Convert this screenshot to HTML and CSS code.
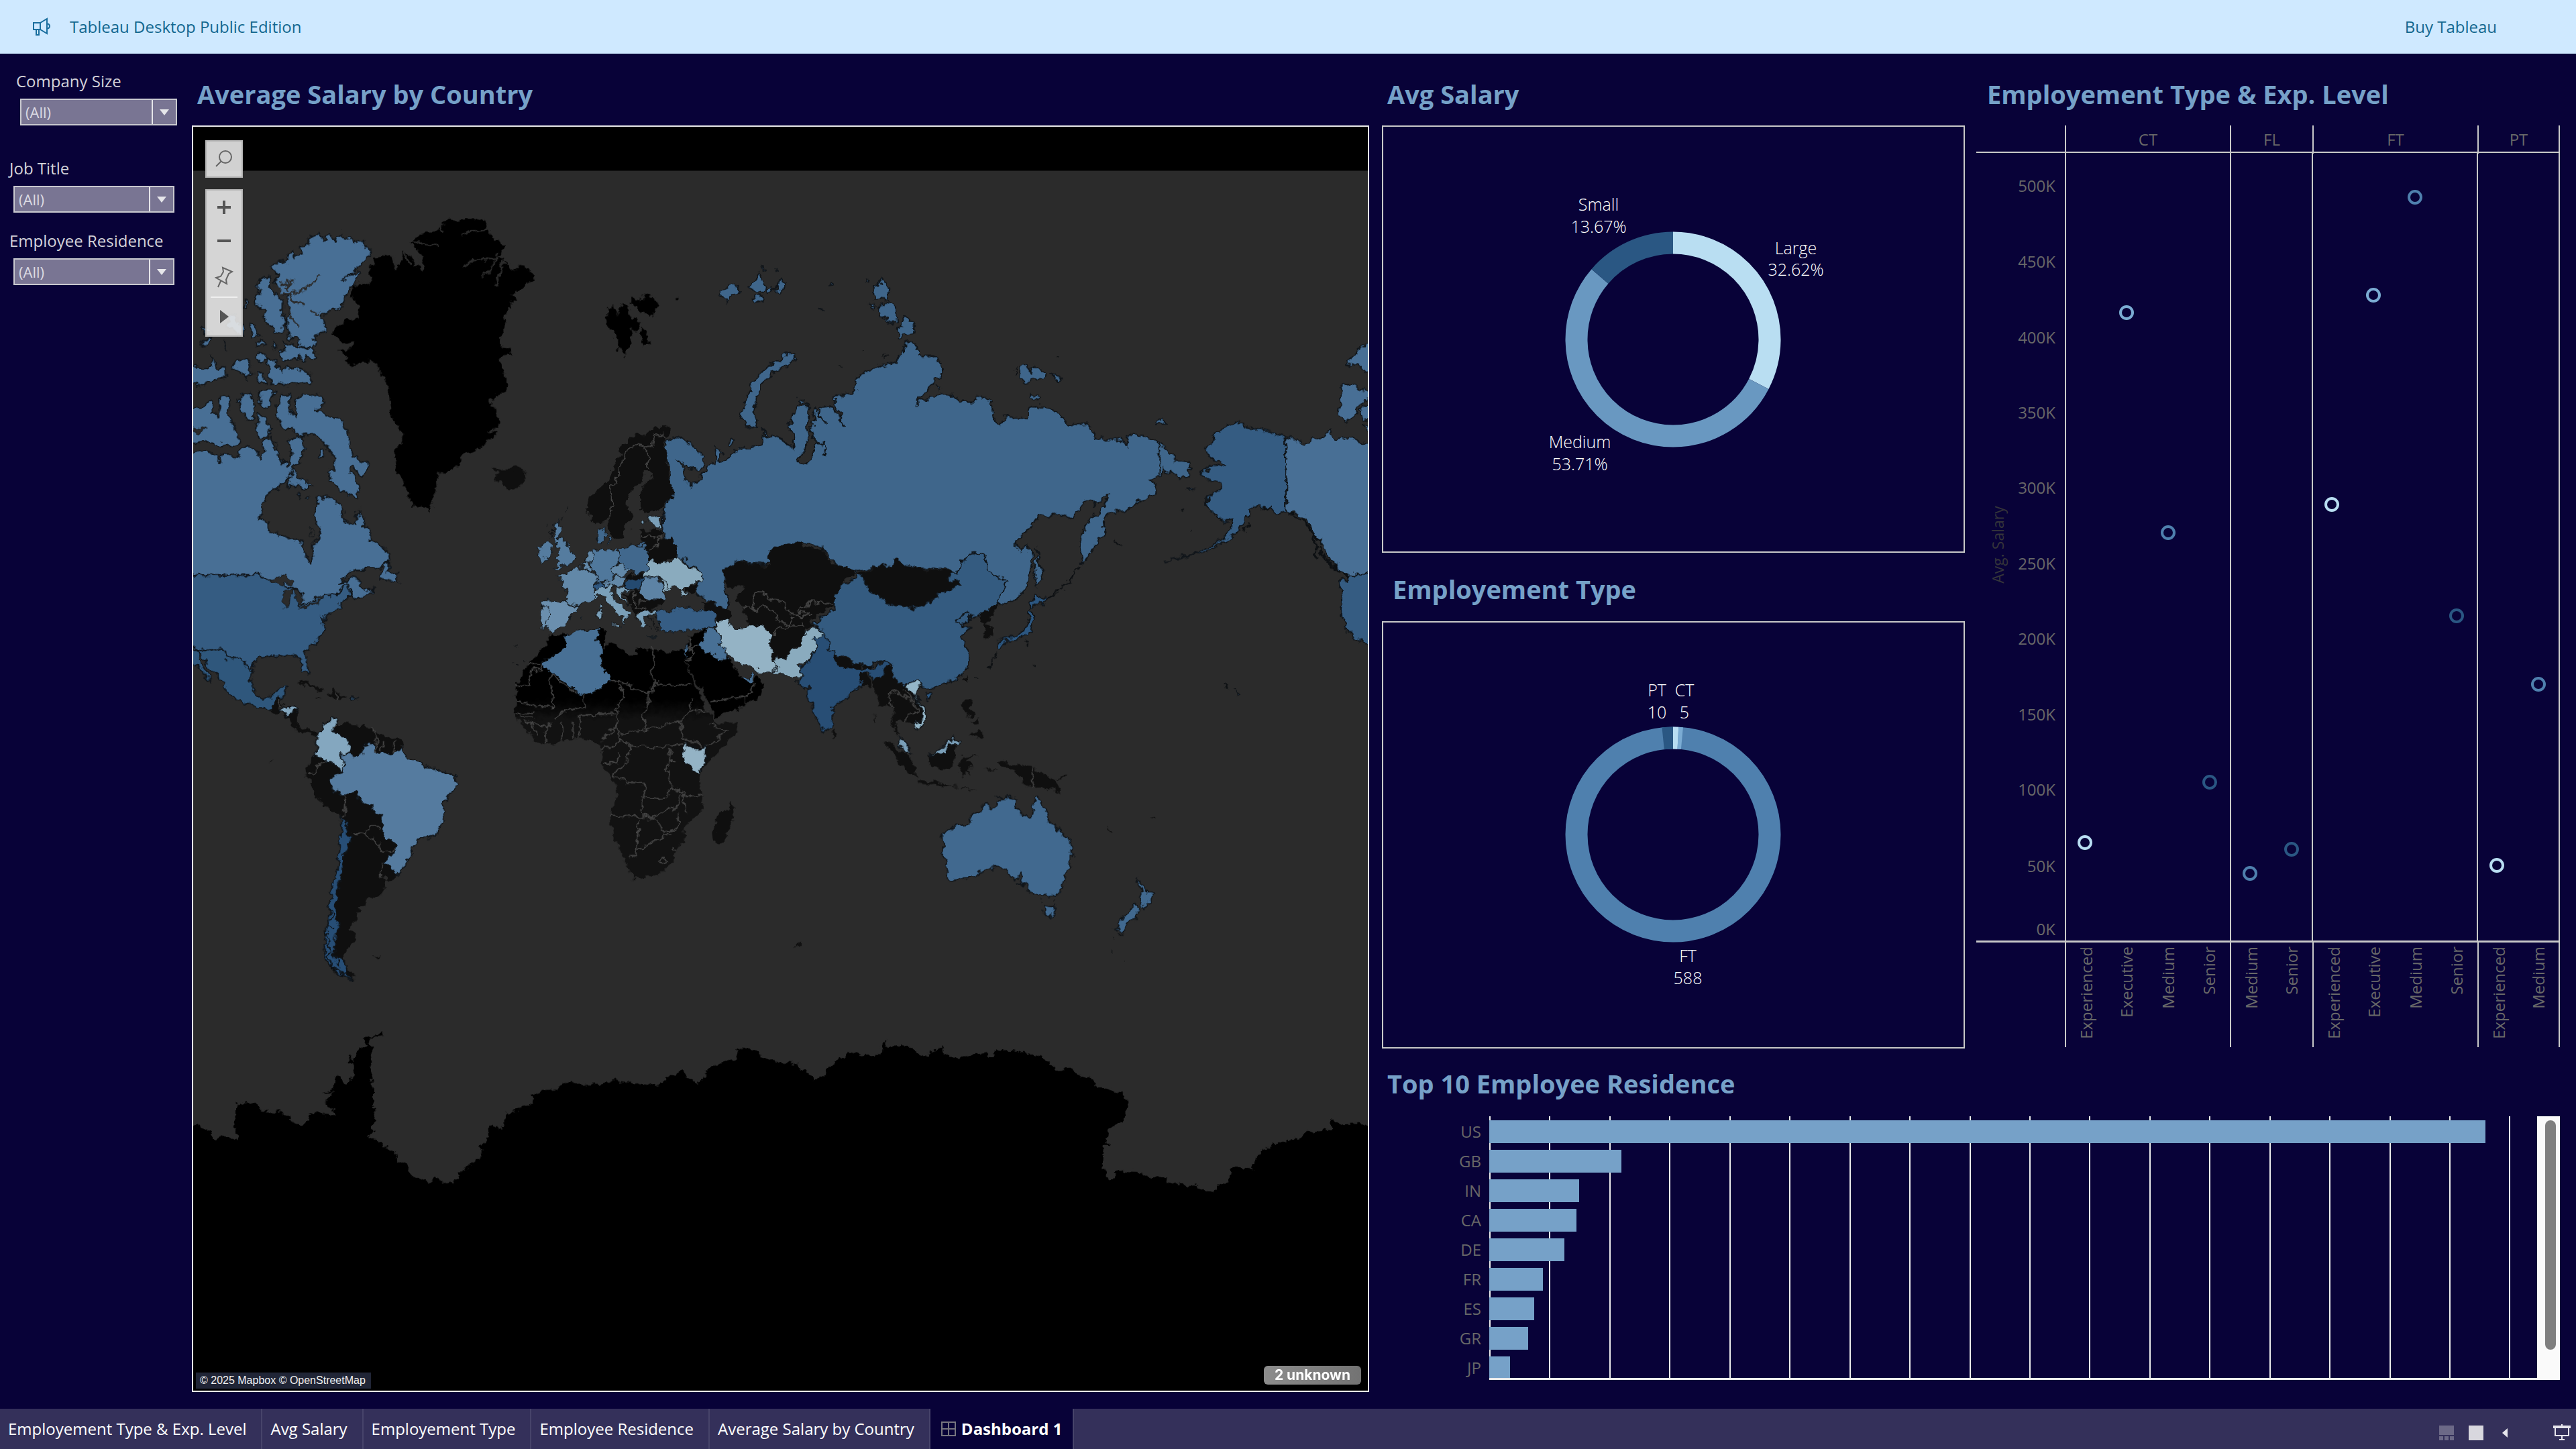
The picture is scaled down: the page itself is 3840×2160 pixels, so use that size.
FILE: index.html
```html
<!DOCTYPE html>
<html lang="en">
<head>
<meta charset="utf-8">
<title>Dashboard 1</title>
<link rel="stylesheet" href="styles.css">
</head>
<body>
<header class="banner">
  <svg class="banner-icon" width="28" height="28" viewBox="0 0 28 28" aria-hidden="true"><path d="M2 8H12L22 2V24L12 18H2ZM12 8V18M6 18V26H10V18M22 9Q26 10 26 13T22 17"/></svg>
  <a class="banner-link" href="#edition">Tableau Desktop Public Edition</a>
  <a class="banner-link banner-buy" href="#buy">Buy Tableau</a>
</header>

<main class="dashboard">
  <form class="filters">
    <div class="filter filter-size">
      <label for="size">Company Size</label>
      <div class="picker"><select id="size"><option>(All)</option></select></div>
    </div>
    <div class="filter filter-job">
      <label for="job">Job Title</label>
      <div class="picker"><select id="job"><option>(All)</option></select></div>
    </div>
    <div class="filter">
      <label for="residence">Employee Residence</label>
      <div class="picker"><select id="residence"><option>(All)</option></select></div>
    </div>
  </form>

  <section class="map-section">
    <h2 class="title title-top">Average Salary by Country</h2>
    <div class="map">
      <svg class="map-art" viewBox="288 188 1751 1885" preserveAspectRatio="xMidYMid slice" role="img" aria-label="World map of average salary">
        <defs>
          <linearGradient id="sahara" x1="0" y1="0" x2="0" y2="1"><stop offset=".28" stop-color="#000"/><stop offset=".36" stop-color="#121212"/></linearGradient>
          <filter id="coastline" filterUnits="userSpaceOnUse" x="270" y="170" width="1790" height="1920" color-interpolation-filters="sRGB">
            <feTurbulence type="fractalNoise" baseFrequency=".09" numOctaves="3" seed="4"/>
            <feDisplacementMap in="SourceGraphic" scale="14" xChannelSelector="R" yChannelSelector="G"/>
          </filter>
        </defs>
        <rect x="280" y="180" width="1770" height="1900" fill="#2b2b2b"/>
        <rect x="280" y="180" width="1770" height="74" fill="#000"/>

        <g filter="url(#coastline)">
        <!-- Antarctica -->
        <g transform="translate(280 900) scale(.5741 .6122)">
          <path d="M-30 1272L30 1270 60 1285 70 1308 90 1295 130 1305 122 1265 120 1235 125 1218 155 1213 183 1218 188 1232 235 1235 265 1245 272 1258 295 1268 312 1262 316 1248 328 1232 340 1243 385 1248 378 1228 355 1213 372 1200 378 1185 348 1194 375 1180 382 1165 388 1145 400 1150 402 1165 412 1170 428 1150 428 1115 412 1112 420 1102 430 1108 440 1088 462 1070 452 1058 480 1056 505 1038 508 1050 490 1052 468 1068 483 1095 472 1115 480 1160 481 1200 487 1230 485 1250 478 1270 480 1290 470 1300 485 1303 520 1325 540 1340 580 1390 620 1410 640 1400 690 1412 705 1385 725 1375 765 1338 762 1320 782 1300 778 1272 795 1268 810 1278 820 1262 830 1238 890 1218 895 1198 930 1182 970 1178 990 1160 1005 1170 1070 1168 1110 1160 1155 1165 1205 1175 1245 1160 1250 1148 1285 1138 1308 1158 1330 1165 1335 1150 1365 1125 1405 1112 1425 1108 1425 1090 1440 1082 1462 1082 1478 1096 1500 1110 1530 1115 1568 1118V1960H-30Z"/>
        </g>
        <g transform="translate(1100 880) scale(.6122)">
          <path d="M0 1118L30 1115 45 1125 55 1140 90 1148 147 1155 152 1168 172 1168 185 1195 212 1180 215 1165 245 1145 270 1125 300 1132 345 1128 355 1098 365 1110 385 1106 410 1108 425 1120 460 1132 478 1115 495 1113 505 1128 530 1137 605 1125 615 1137 630 1120 670 1118 740 1138 775 1165 815 1163 830 1177 860 1187 875 1208 925 1220 950 1243 945 1275 935 1290 912 1300 900 1325 895 1345 907 1350 890 1352 887 1395 895 1425 905 1434 918 1432 920 1412 970 1415 1000 1426 1035 1428 1055 1443 1130 1453 1157 1465 1170 1450 1197 1430 1200 1408 1215 1403 1252 1410 1262 1383 1280 1360 1305 1348 1335 1348 1345 1337 1370 1332 1380 1322 1405 1315 1440 1313 1446 1287 1470 1300 1510 1298 1534 1303 1570 1303V1980H0Z"/>
          <path d="M140 857h12v8h-12zM1003 553l10-4 1 6zM900 575l16 13-6 1zM827 457l8 6zM480 275h8zM1020 543h4z" fill="#111"/>
        </g>

        <!-- Americas, north -->
        <g class="land" transform="translate(280 180) scale(.5741)">
          <path class="ice" d="M680 256L735 251 775 262 778 275 765 283 785 284 790 300 825 322 808 345 797 352 820 355 826 375 835 372 840 392 858 375 880 378 896 398 885 420 870 428 862 436 845 450 855 462 830 485 825 515 818 540 812 580 830 590 838 605 812 612 815 640 826 660 830 690 820 710 798 712 788 722 788 740 802 750 808 798 775 805 802 812 770 842 735 857 720 858 712 870 705 893 690 898 682 911 655 912 648 930 650 955 636 975 628 1018 608 1000 585 1002 570 965 555 930 542 910 538 860 550 838 560 820 548 795 530 772 525 735 522 690 515 675 500 658 498 640 480 625 455 625 440 632 420 635 405 625 412 610 390 595 430 588 432 575 400 577 378 555 380 540 410 518 437 512 450 485 440 468 423 462 428 430 445 420 470 425 475 400 470 380 490 355 525 348 535 372 555 375 558 335 575 350 590 370 608 388 605 350 590 330 578 315 600 295 620 288 640 290 655 270Z"/>
          <path class="fjord" d="M708 299L735 286 770 285M585 315L630 317 650 328M718 380L738 360 800 357 785 395 762 397M820 362L800 428M600 350L610 385M450 412L470 428M530 350L540 385M562 340L575 372M650 272L668 288"/>
          <path class="dark" d="M790 900L812 905 830 905 858 897 872 905 878 920 865 945 835 955 815 945 808 935 795 925 810 918ZM280 1458L305 1455 340 1472 360 1480 340 1483 310 1466ZM360 1490L375 1475 400 1490 412 1497 385 1500ZM333 1498h12v3h-12zM728 1290h4zM750 1298h14zM775 1310h5zM840 1405h18zM868 1402h14z"/>
          <path class="ice" d="M1087 485L1112 480 1115 510 1125 475 1145 478 1152 510 1175 522 1170 535 1155 540 1150 575 1140 590 1134 614 1115 590 1118 570 1105 550 1090 530ZM1150 455L1170 465 1190 450 1222 465 1224 480 1202 508 1170 495 1155 475ZM1178 535L1195 560 1197 580 1180 583 1175 560ZM1265 460l10-1-2 8-8-1z"/>
          <path class="ca" d="M216 380L235 365 255 362 272 335 278 352 292 345 296 325 310 322 320 302 345 292 350 308 370 293 378 310 400 290 405 308 425 300 430 315 455 308 460 325 475 335 474 352 440 380 402 412 420 400 445 392 435 420 415 440 405 470 385 492 350 500 345 505 357 520 358 550 330 555 332 575 315 590 290 585 280 565 268 570 262 545 255 530 262 490 258 455 235 440 225 415 235 400ZM200 402L212 405 215 430 230 450 245 470 245 500 255 520 245 548 232 552 210 530 195 510 200 490 178 475 176 455 190 440 180 425ZM250 570L265 580 300 590 330 592 334 615 322 622 310 610 300 622 285 612 270 622 250 622 235 612 238 598 250 595ZM205 615L225 625 240 650 260 640 300 650 320 655 318 680 285 685 260 685 235 680 215 682 213 655ZM178 602L195 600 204 622 190 628 175 615ZM180 655L196 652 200 680 182 678ZM120 625L145 618 165 630 165 660 150 670 140 650 118 645ZM-20 622L38 645 60 640 62 610 75 640 95 640 98 665 60 675 35 688 -20 675ZM160 528L175 530 188 558 168 562ZM35 572L62 560 55 580 40 585ZM178 572h22l4 8-22 4zM96 570l8 24-6-4zM220 576l12 4-4 12-8-6zM150 465l6 10-2 10-6-6zM108 502L122 505 130 520 145 540 142 560 120 552 104 530ZM35 535l15 5 12 10-15 2zM-20 735L25 748 40 738 60 725 65 755 80 765 85 715 105 712 108 770 135 830 115 845 80 840 40 835 -20 845ZM185 702L230 702 215 735 195 745 187 730ZM130 730L145 705 165 705 175 740 168 775 155 775 140 750ZM182 760L200 770 212 800 205 820 185 822 178 800ZM232 740L245 712 270 708 262 735 266 760 278 765 280 725 300 708 345 715 355 740 330 748 355 760 375 770 400 780 415 800 420 825 418 850 440 875 472 888 465 915 445 920 430 900 420 905 440 940 442 980 420 968 400 960 370 935 365 910 382 905 378 870 355 835 335 815 305 810 290 820 270 800 240 795 232 770ZM342 855L355 852 357 872 345 875ZM262 925L270 905 280 912 282 925 300 935 325 950 300 955 285 945 265 950ZM285 965l10 2-4 10zM305 980l12-4-2 12zM500 1190L510 1155 520 1145 520 1170 540 1175 545 1200 520 1192Z"/>
          <path class="fjord" d="M225 425L240 445 258 450 300 440 320 425 342 398M240 425L280 418M262 415L255 440M258 450L300 480M262 490L275 525 290 535M318 492L340 500"/>
          <path class="ca" d="M-20 862L50 855 75 870 85 890 90 865 130 870 150 845 165 855 180 862 190 878 198 860 195 835 215 820 235 870 245 890 252 880 262 895 270 860 262 835 275 815 300 830 302 860 290 885 275 895 262 925 240 945 212 965 195 990 190 1030 205 1040 210 1062 240 1072 270 1090 295 1092 300 1120 318 1148 326 1125 325 1100 340 1085 345 1060 335 1040 330 1025 335 1000 335 975 360 975 380 985 400 1005 402 1035 420 1045 435 1042 445 1010 460 1045 475 1085 500 1105 520 1120 522 1140 500 1160 450 1162 430 1162 410 1180 395 1205 420 1188 445 1190 440 1205 465 1218 485 1215 465 1230 440 1244 430 1240 425 1225 415 1200 400 1215 395 1228 360 1230 325 1245 290 1262 295 1225 285 1215 250 1210 240 1195 190 1185 188 1178 -20 1178"/>
          <path class="us" d="M-20 1178L188 1178 190 1185 240 1195 250 1210 285 1215 295 1225 290 1262 325 1245 360 1230 395 1228 400 1215 415 1200 425 1225 418 1240 397 1248 395 1265 365 1278 355 1300 347 1290 354 1330 335 1350 310 1370 303 1385 313 1415 313 1435 300 1425 292 1395 282 1388 262 1385 240 1392 215 1388 180 1393 168 1408 168 1430 155 1418 140 1395 115 1400 100 1385 85 1372 60 1378 -20 1362"/>
          <path class="mx" d="M-20 1362L60 1378 85 1372 100 1385 115 1400 140 1395 155 1418 168 1430 165 1455 172 1485 195 1500 222 1492 228 1475 258 1470 250 1495 240 1500 228 1505 215 1530 205 1530 180 1520 150 1512 105 1490 100 1475 85 1450 60 1425 40 1395 22 1372 30 1400 55 1440 63 1455 45 1445 30 1420 -20 1392"/>
          <path class="us" d="M424 1497h14v5h-14z"/>
          <path class="lake" d="M215 1192L235 1182 255 1180 275 1195 272 1208 250 1200 235 1206ZM248 1235L255 1220 288 1215 268 1222 262 1262 252 1265 248 1250ZM272 1215L290 1220 303 1242 298 1256 285 1250ZM288 1268L345 1243 340 1250 295 1270ZM322 1243L352 1232 345 1240ZM318 1055L325 1055 328 1080 316 1078ZM12 795L45 798 40 808 12 806Z"/>
        </g>

        <!-- Americas, south -->
        <g class="land" transform="translate(280 900) scale(.5741 .6122)">
          <path class="dark" d="M212 262L225 240 240 225 245 240 240 255 285 255 285 290 295 300 315 308 340 318 330 320 310 316 290 314 270 290 245 266 225 266Z"/>
          <path class="dark" d="M335 315L350 310 355 292 385 280 390 290 430 292 475 298 490 315 545 332 560 345 565 375 600 385 615 400 660 402 695 420 698 440 665 480 660 525 645 560 600 575 582 595 580 610 543 660 535 670 505 668 512 690 500 708 465 712 460 735 442 738 450 752 440 755 435 775 420 792 435 810 430 825 415 840 405 862 415 890 437 902 420 912 385 900 360 870 355 830 370 760 372 700 388 640 395 580 400 520 375 505 350 492 330 455 305 415 308 395 320 370 328 365 335 340Z"/>
          <path class="co" d="M335 315L350 310 355 292 385 280 390 285 378 300 385 320 415 325 422 345 418 365 402 365 405 380 402 408 385 390 360 385 345 372 328 365 335 340ZM237 262L248 250 280 250 287 256 262 270 245 265Z"/>
          <path class="br" d="M402 365L425 362 440 370 455 362 455 345 485 338 490 362 515 365 550 355 560 345 568 375 600 385 615 400 660 402 695 420 698 440 690 455 665 480 663 525 645 560 600 575 582 595 580 615 560 640 543 660 525 640 508 628 535 605 540 590 525 572 510 570 505 555 505 520 485 508 480 488 460 485 440 470 438 455 410 465 380 458 370 435 378 415 402 408Z"/>
          <path class="cl" d="M400 520L408 525 412 560 425 568 412 605 402 615 400 660 388 700 385 740 388 780 385 815 378 850 385 862 412 868 412 900 425 912 395 905 375 885 358 862 354 830 364 780 368 735 372 700 388 650 395 580Z"/>
          <path class="rift" d="M355 795L370 815 360 830 372 845 362 860 380 872 372 885 392 890 400 905 412 900M366 745L376 760 366 775 374 790M385 865L395 885"/>
          <path class="line" d="M475 298L490 315 490 362M505 332L503 362M537 335L535 360M315 415L330 412 335 395 355 382M408 465L405 520M425 560L460 560 470 538 495 538 500 550M460 560L500 585 500 602 525 604 538 595M508 628L500 650 502 668M388 290L378 300M240 232L240 250M385 215V232"/>
          <path class="dark" d="M478 860l24-4-8 8zM676 892l12 6zM220 380h3v3h-3z"/>

          <!-- Africa -->
          <path fill="url(#sahara)" d="M912 122L930 95 945 72 980 75 1065 60 1085 65 1085 95 1120 105 1150 122 1162 125 1170 105 1200 112 1240 118 1280 112 1292 120 1290 140 1325 210 1350 260 1365 285 1375 292 1428 285 1425 305 1395 345 1345 395 1328 415 1330 450 1338 465 1338 500 1290 540 1293 578 1270 590 1265 620 1225 660 1155 670 1148 650 1120 600 1095 520 1115 465 1100 425 1080 400 1070 385 1078 360 1072 340 1040 330 1020 325 970 335 930 342 900 330 880 305 855 280 848 258 855 235 850 205 870 165 890 140Z"/>
          <path class="dark" d="M1412 478L1422 500 1412 530 1395 580 1378 587 1363 570 1370 515 1400 500Z"/>
          <path class="ice" d="M1288 132L1295 100 1300 80 1345 60 1380 70 1400 130 1420 150 1440 185 1465 190 1480 178 1502 195 1490 220 1440 250 1365 275 1350 235 1310 170Z"/>
          <path class="line" d="M885 148H920V160L890 162 885 200H850M940 170L948 250H893M940 170L1015 218M1030 222V250L975 262 950 285M893 250L880 240H852M850 265H895M862 275H895M945 290L930 300 930 340M970 290V333M1000 285V325M1018 270V325M1018 270L1110 268 1115 290 1075 330M1095 185L1120 188 1130 225 1112 265M1120 188L1197 216V240L1180 270 1195 305 1120 320M1207 105V215M1207 197H1305M1197 216H1207M1195 305L1240 295 1275 285 1305 260 1310 230M1305 260L1355 262M1275 285L1290 330 1345 347 1400 310 1355 290M1150 345L1240 350 1285 338M1150 345L1140 380 1105 420 1135 424 1140 435 1180 435 1185 470 1240 475 1255 445 1245 400 1255 355M1180 470V515L1210 518 1275 490 1280 455 1255 445M1093 516L1180 520 1210 522 1240 555 1270 550 1275 510M1170 525V560L1165 612 1145 615M1170 598L1235 562 1255 560M1228 615l10 4 4 8-10 4-6-8zM1285 468L1338 462M1285 455L1295 510M1260 590v10h8M1080 385L1115 385 1118 360M1357 238L1440 226 1465 215 1468 192M1440 226L1448 242M1085 95L1080 112M1325 100L1300 112M870 285L895 290 930 300M895 290L905 320M1115 290L1120 330 1150 345M1075 350H1100L1120 330M1250 380H1265"/>
          <path class="ke" d="M1285 335L1300 345 1320 352 1347 345 1343 365 1345 385 1328 413 1300 395 1283 380 1290 355Z"/>
        </g>

        <!-- Russia, western part -->
        <g class="land" transform="translate(280 180) scale(.5741)">
          <path class="ru" d="M1568 842L1540 825 1512 816 1508 842 1470 850 1445 850 1410 865 1400 885 1378 880 1390 860 1370 845 1372 895 1355 890 1345 905 1335 925 1318 935 1305 945 1290 930 1290 905 1270 880 1300 900 1330 908 1343 890 1340 870 1300 835 1270 820 1245 830 1240 850 1250 900 1250 940 1260 965 1240 1000 1235 1015 1232 1055 1240 1085 1258 1095 1268 1130 1268 1140 1285 1133 1300 1150 1333 1172 1330 1195 1315 1225 1340 1240 1370 1255 1395 1268 1405 1250 1400 1225 1395 1200 1392 1165 1430 1142 1450 1148 1480 1155 1510 1150 1515 1115 1568 1100"/>
          <path class="ru" d="M1405 832l10-6 4 10-10 8zM1378 440l20-5 10-8 22 0 0 15-22 10-8 18-10-14zM1458 432l25-40 8 20 8 28-20 8zM1470 458l20-4 4 12-18 4zM1500 438l15-8 6 14-18 8zM1522 438l18-25 10 8-8 20zM1488 375h10l-2 8zM1526 382l10 2-4 4z"/>
        </g>

        <!-- Asia and the Pacific, north -->
        <g class="land" transform="translate(1100 180) scale(.6122 .5741)">
          <path class="ru" d="M0 850L25 848 60 840 65 818 85 818 110 830 138 852 130 800 125 785 145 738 165 735 172 745 172 830 155 870 145 885 165 895 180 870 190 840 178 800 190 740 200 770 215 785 195 770 200 745 225 740 250 770 258 795 250 760 235 740 235 715 285 705 285 670 310 650 350 635 385 625 400 600 405 580 420 573 435 585 440 610 475 610 495 625 497 660 465 690 432 738 450 722 495 710 530 715 545 730 575 730 585 710 615 725 622 765 637 793 650 770 705 772 708 745 735 740 775 750 805 790 850 785 865 800 870 825 930 825 945 840 955 812 990 815 1025 835 1068 880 1095 885 1105 905 1080 935 1065 915 1035 905 1030 925 1000 930 1015 940 1020 970 980 985 950 1012 905 1015 890 1040 893 1075 865 1110 840 1150 832 1090 845 1050 880 1015 905 970 890 975 870 1000 860 985 845 990 825 1015 820 1033 790 1022 730 1027 700 1070 672 1098 690 1115 700 1100 715 1120 718 1150 705 1200 680 1240 655 1252 637 1250 640 1225 662 1190 635 1187 610 1165 600 1130 575 1118 550 1130 545 1155 530 1172 515 1162 460 1165 440 1160 410 1155 380 1138 375 1158 330 1158 285 1172 235 1150 205 1108 145 1092 80 1115 78 1150 40 1150 0 1142"/>
          <path class="ru" d="M728 1110L735 1150 742 1182 728 1210 722 1170ZM125 602L140 605 135 625 90 650 60 680 45 720 38 760 48 795 20 790 8 770 15 740 30 690 60 650 95 622ZM352 408L370 435 365 465 330 462 335 430ZM345 480L370 468 385 480 387 520 370 525 345 505ZM408 505L430 530 430 548 388 562 395 535ZM320 472L338 478 330 488ZM312 410h8v6h-8zM685 640L700 632 712 650 720 635 745 652 745 665 720 670 700 680 685 660ZM758 655L770 662 790 668 780 678ZM715 710L735 718 732 725 712 720ZM1018 780L1035 772 1045 785 1018 790ZM1090 950l22 4-4 5zM224 425h7v5h-7zM200 488l8 6zM480 688l14 2-4 8zM150 722h10v8h-10zM60 800l12 12-4 6z"/>
          <path class="rift" d="M1025 835V922M190 840L208 835 215 868M245 640h8M300 595h5M350 605l8-5M355 610l12-2M675 645v12M775 612h6M1080 1006l6 4M1102 1062h3M912 1090l18 12M832 1160L815 1185 790 1210 755 1240"/>
          <path class="us" d="M1335 822L1300 808 1250 798 1212 780 1190 795 1162 810 1158 835 1135 850 1150 870 1165 885 1182 893 1155 900 1125 910 1140 930 1175 935 1176 955 1145 970 1140 995 1150 1015 1170 1025 1175 1038 1208 1035 1200 1060 1180 1085 1150 1105 1110 1125 1075 1136 1035 1143 1075 1138 1110 1128 1150 1112 1190 1088 1215 1068 1235 1040 1245 1010 1268 992 1275 1008 1290 1005 1310 1018 1335 1012Z"/>
          <path class="ca" d="M1570 850L1534 838 1500 825 1470 820 1455 830 1440 800 1425 825 1400 822 1380 838 1360 828 1335 822V1012L1355 1018 1385 1030 1400 1065 1420 1095 1440 1140 1480 1178H1570"/>
          <path class="us" d="M1570 1178H1484L1482 1198 1466 1188 1472 1240 1470 1280 1480 1310 1500 1345 1525 1352 1570 1390"/>
          <path class="ca" d="M1570 700L1534 700 1510 690 1490 686 1466 692 1470 715 1460 765 1472 770 1480 783 1500 770 1505 745 1534 725 1570 720M1570 575L1530 580 1515 590 1495 612 1480 635 1510 630 1525 650 1570 650M1570 735L1525 740 1512 755 1520 775 1570 770M1570 790l-50 0 15 10h30"/>
          <path class="rift thick" d="M1340 1018L1375 1035M1378 1030L1395 1065 1420 1090M1385 1050L1410 1085M1400 1080L1410 1110M1415 1110L1440 1150 1480 1175 1484 1195M1405 1105L1412 1135M1230 1060l15-15M1285 1010l12-8"/>
          <path class="dark" d="M292 1175L345 1155 372 1160 382 1138 410 1155 440 1160 460 1168 520 1165 515 1190 545 1203 510 1218 480 1235 470 1252 430 1266 360 1253 345 1232 318 1222 315 1200Z"/>
          <path class="cn" d="M290 1175L315 1200 318 1222 345 1232 360 1253 430 1266 470 1252 480 1235 510 1218 545 1203 515 1190 520 1168 530 1172 545 1155 550 1130 575 1118 600 1130 610 1165 635 1187 662 1190 640 1225 637 1250 620 1265 585 1288 570 1285 548 1310 530 1298 560 1275 562 1290 545 1312 568 1315 545 1335 555 1360 565 1388 555 1430 520 1455 480 1470 440 1470 410 1462 390 1468 375 1445 378 1410 355 1398 325 1412 290 1412 255 1390 220 1380 222 1350 205 1330 185 1300 235 1270 232 1225 250 1205 275 1198Z"/>
          <path class="dark" d="M585 1280L628 1258 620 1285 602 1305 620 1315 620 1340 598 1342 600 1305 588 1298ZM550 1445L562 1436 556 1460Z"/>
          <path class="jp" d="M630 1355L650 1345 680 1335 700 1322 710 1295 706 1272 718 1272 722 1300 712 1330 690 1340 672 1350 655 1348 645 1358 640 1375 630 1370ZM722 1225L740 1240 752 1245 740 1255 722 1255 708 1262ZM458 1488L475 1484 470 1498 460 1498Z"/>
          <path class="rift" d="M752 1245L780 1225M630 1385L610 1425M575 1445h12M1185 1465l10 3M1208 1474l8 4M725 1412v5M705 1350v15"/>
          <path class="us" d="M1216 1482l8 6-6 4z"/>
        </g>

        <!-- South Asia, Oceania -->
        <g class="land" transform="translate(1100 880) scale(.6122)">
          <path class="in" d="M185 90L205 100 220 118 222 145 232 150 232 165 260 180 300 190 330 188 360 168 375 175 350 200 330 225 325 205 300 200 300 235 285 240 260 265 232 285 230 325 210 345 195 320 175 265 172 232 160 240 145 225 158 212 150 190 175 170 188 140 180 110Z"/>
          <path class="dark" d="M232 158L240 155 270 172 295 180 292 192 260 185 235 170ZM302 178L325 180 322 188 302 188ZM298 198L320 205 325 232 300 232ZM328 225L352 200 372 174 380 212 405 232 430 255 450 290 448 312 428 328 412 318 390 310 382 325 392 355 385 350 375 320 380 285 365 275 345 280ZM230 335L243 348 235 360 228 350ZM353 368L375 372 410 400 435 430 435 455 415 442 385 405ZM435 460L495 468 540 478 500 475 445 468ZM545 480l40 6-40-2zM545 405L585 402 555 412 572 430 560 430 570 452 555 435 552 452 540 440ZM462 400L480 400 510 378 530 375 528 405 515 438 475 430 462 415ZM632 418L655 415 690 425 720 430 760 455 790 492 760 480 715 482 695 475 690 455 665 438ZM765 458L790 455 800 445 802 450 790 460ZM555 262L567 262 562 290 578 300 570 306 552 300 548 280ZM565 350L595 338 598 360 580 355ZM568 318L590 310 588 330 578 325ZM330 300l4 20-3 2zM336 345l4 8zM600 435h28v3h-28zM610 402l4 5z"/>
          <path class="line" d="M370 250L385 245 410 262 430 268 435 295 412 298 410 318M370 250L372 270 382 285M715 430V482M405 240L415 250 430 265"/>
          <path class="vn" d="M403 230L415 225 432 220 447 235 432 252 440 270 458 285 462 312 432 340 428 325 448 312 450 290 430 260 425 245Z"/>
          <path class="my" d="M390 358L408 362 415 380 420 398 405 390 395 375ZM468 400L495 382 512 368 525 355 540 368 512 378 505 398Z"/>
          <path class="au" d="M500 590L520 578 560 565 570 545 585 540 600 522 615 528 625 530 635 512 650 503 680 508 675 530 690 540 710 552 718 545 720 505 727 497 735 520 748 532 757 562 780 580 790 595 812 615 814 650 800 690 790 720 785 735 755 745 735 742 710 735 705 720 690 712 690 685 675 705 655 680 635 673 590 685 575 697 545 698 530 707 510 700 512 680 498 640 500 620 496 600ZM745 765L773 768 772 780 760 796 750 785ZM970 703L985 715 995 735 1013 735 1000 760 988 773 978 748 985 735ZM965 765L978 772 968 798 950 810 938 830 918 825 935 800ZM630 502h12v2h-12zM680 714l12 2-8 2z"/>
          <path class="rift" d="M738 755v4M772 752v6M928 834l6 2M914 880v3M918 847h2M938 902h2"/>
        </g>

        <!-- Europe and the Middle East -->
        <g class="land fine" transform="translate(760 620) scale(.3333)">
          <path class="dark" d="M345 410L350 370 400 325 440 290 455 240 500 160 490 130 520 125 540 100 560 85 600 85 640 55 650 40 670 55 680 38 720 60 700 100 690 130 705 180 700 210 710 280 733 340 680 415 600 432 585 415 585 340 600 310 640 265 635 245 600 245 590 290 530 355 525 405 548 440 515 490 512 530 475 550 445 520 440 460 380 485 360 470Z"/>
          <path class="line" d="M440 460L458 400 450 310 478 300 490 230 515 160 580 115 610 135 640 135 650 90 685 75 700 100M580 115L615 170 625 240"/>
          <path class="dark" d="M580 505L625 515 650 500 680 510 685 545 722 545 745 605 735 635 700 650 620 645 618 590 585 555ZM955 690L1020 650 1050 660 1100 668 1170 670 1155 640 1170 595 1250 575 1285 560 1310 565 1320 590 1370 600 1395 590 1440 665 1500 670 1543 698 1520 720 1480 760 1475 790 1450 800 1445 850 1390 880 1350 910 1365 940 1320 950 1315 1000 1250 1060 1230 1080 1170 1080 1160 1000 1165 960 1110 930 1065 935 1050 880 1020 830 1015 800 1050 770 1030 755 990 770 960 720ZM860 830L900 830 950 850 985 870 990 895 975 905 940 915 910 890 880 865ZM505 795L555 790 555 770 600 790 605 820 690 820 680 850 610 868 575 880 565 905 550 870 540 830ZM520 720L560 700 600 705 600 722 555 725 525 735ZM780 765L845 750 825 780 790 785ZM540 498l8 5-6 4zM750 988l18-6z"/>
          <path class="line" d="M585 535L620 528 660 545 655 580 630 595M660 545L685 540M1090 865V795L1130 785 1175 822 1225 825 1245 870 1275 890 1300 860 1350 830 1445 840M1040 860L1065 850 1090 870 1130 845 1175 870 1200 905 1250 940 1310 940 1315 920M1275 890H1350M1280 880L1330 870 1300 900M1250 940L1265 900M1250 940L1215 950 1170 980M550 790L560 850 605 860M575 830l35-5M800 1035L840 1025M785 1085L810 1080 825 1055 800 1035 800 990"/>
          <path class="de" d="M410 590L440 600 478 582 487 620 487 660 452 685 470 710 455 738 385 740 390 710 368 690 362 650 375 605Z"/>
          <path class="pl" d="M487 592L545 572 570 582 615 582 620 635 615 700 560 700 520 680 487 660ZM565 565l38 2 4 12-36 0zM395 515L425 497 427 535 415 550 412 575 395 560ZM435 545L455 540 452 560 440 568Z"/>
          <path class="ee" d="M617 447L682 445 672 465 678 495 650 490 620 470ZM597 462l12 0-2 14-10 2z"/>
          <path class="fr" d="M452 685L490 665 548 690 500 712 470 710ZM415 745L460 735 485 710 520 718 510 750 480 765 425 755ZM335 650L350 608 377 610 365 655ZM310 662L345 652 368 680 360 698ZM300 668L360 698 390 710 385 740 365 765 375 790 380 815 340 828 320 835 315 848 250 830 258 785 240 750 205 720 225 715 255 705Z"/>
          <path class="ch" d="M362 768L395 740 425 755 415 775 385 775Z"/>
          <path class="hu" d="M515 745L555 725 600 722 585 765 545 778 515 765Z"/>
          <path class="ro" d="M600 728L660 728 685 760 690 790 700 800 690 820 640 820 605 815 578 780Z"/>
          <path class="ua" d="M620 645L730 655 735 632 770 632 775 650 815 680 858 695 855 735 820 750 790 765 765 770 800 795 770 805 760 772 730 760 705 785 690 790 680 725 600 725 615 690Z"/>
          <path class="line coast" d="M665 722L680 735 688 765 690 790 712 765 695 735Z"/>
          <path class="it" d="M375 790L395 778 410 765 440 752 455 765 450 785 462 810 500 850 540 885 520 895 515 930 500 900 460 860 430 830 425 805 400 805 378 812ZM458 932L495 932 492 952 470 945ZM395 875L412 872 410 908 397 908ZM400 845L410 843 408 865 400 862ZM470 765L505 768 545 780 500 790 510 815 540 845 500 820 480 795ZM572 890L605 870 660 868 655 880 620 885 600 905 615 925 605 955 590 945 575 915ZM620 982h30v3h-30z"/>
          <path class="es" d="M140 830L160 822 250 830 290 848 318 850 300 872 270 895 265 920 245 940 215 950 195 965 180 945 143 947 137 920 150 860ZM312 902l8-4 0 6z"/>
          <path class="line coast" d="M147 857L180 857 170 890 165 945"/>
          <path class="gb" d="M195 480L220 470 225 490 243 495 238 515 215 540 245 550 260 590 275 610 295 625 290 655 240 672 195 685 230 650 200 640 225 610 205 590 215 560 195 530ZM125 590L145 585 150 570 165 560 188 570 185 610 175 635 130 650 135 620Z"/>
          <path class="rift" d="M165 500l10-20M180 520l10 20M188 500v20M250 430l10-25M228 465l6-12M5 1105l15-5M30 1108l10-4M60 1100l10-8M20 1025h12M610 890l20 25M630 900l20 40M620 930l15 30M645 890l15 20M650 945l20 15M478 790L495 815 540 845"/>
          <path class="tr" d="M660 870L680 860 710 875 770 857 800 862 830 868 905 868 920 905 920 945 870 950 800 958 780 965 745 955 700 965 670 950 660 915Z"/>
          <path class="dz" d="M245 985L290 960 330 955 393 952 393 980 385 1005 410 1035 415 1125 450 1180 360 1240 325 1250 290 1220 145 1115 150 1095 190 1080 215 1055 250 1035Z"/>
          <path class="dz" d="M875 955L920 945 945 990 950 1030 975 1065 975 1085 930 1087 880 1050 842 1025 872 1000ZM1030 1170L1075 1168 1088 1145 1095 1155 1080 1190 1045 1185ZM780 1050L790 1020 796 1040 785 1085Z"/>
          <path class="ir" d="M918 905L940 915 975 903 985 935 1030 955 1060 955 1075 935 1105 928 1165 960 1160 1010 1175 1050 1165 1080 1195 1120 1178 1152 1110 1145 1090 1125 1050 1120 1010 1090 975 1065 950 1030 940 990Z"/>
          <path class="ua" d="M1170 1082L1235 1080 1260 1050 1290 1035 1315 990 1320 960 1350 952 1385 955 1400 980 1355 990 1365 1035 1330 1100 1290 1110 1310 1165 1265 1168 1250 1150 1178 1152 1195 1120Z"/>
        </g>
        </g>
      </svg>
      <button class="map-search" type="button" aria-label="Search map">
        <svg width="28" height="28" viewBox="0 0 28 28" aria-hidden="true"><path d="M25 11A9 9 0 1 1 7 11A9 9 0 0 1 25 11ZM9 18L2 25" fill="none" stroke="#666" stroke-width="2"/></svg>
      </button>
      <div class="map-tools">
        <button type="button" aria-label="Zoom in"><svg width="28" height="28" viewBox="0 0 28 28"><path d="M14 4V24M4 14H24" fill="none" stroke="#555" stroke-width="4"/></svg></button>
        <button type="button" aria-label="Zoom out"><svg width="28" height="28" viewBox="0 0 28 28"><path d="M4 14H24" fill="none" stroke="#555" stroke-width="4"/></svg></button>
        <button class="tool-pin" type="button" aria-label="Reset map"><svg width="28" height="32" viewBox="0 0 28 32"><path d="M12 2L26 8L21 11L17 20L18 26L2 17L9 15L13 8ZM9 22L5 31" fill="none" stroke="#666" stroke-width="2"/></svg></button>
        <button class="tool-more" type="button" aria-label="Map tools"><svg width="28" height="28" viewBox="0 0 28 28"><path d="M8 4L21 14L8 24Z" fill="#555"/></svg></button>
      </div>
      <p class="map-credit">© 2025 Mapbox © OpenStreetMap</p>
      <button class="map-unknown" type="button">2 unknown</button>
    </div>
  </section>

  <div class="right">
    <div class="charts">
      <div class="donuts">
        <section>
          <h2 class="title title-top">Avg Salary</h2>
          <svg class="donut" viewBox="0 0 865 633" role="img" aria-label="Average salary by company size">
            <g fill="none" stroke-width="33">
              <circle cx="432" cy="317" r="144" stroke="#b9def2" pathLength="10000" stroke-dasharray="3262 6738" transform="rotate(-90 432 317)"/>
              <circle cx="432" cy="317" r="144" stroke="#6998c1" pathLength="10000" stroke-dasharray="5371 4629" stroke-dashoffset="-3262" transform="rotate(-90 432 317)"/>
              <circle cx="432" cy="317" r="144" stroke="#2a5783" pathLength="10000" stroke-dasharray="1367 8633" stroke-dashoffset="-8633" transform="rotate(-90 432 317)"/>
            </g>
            <g class="mark">
              <text x="321" y="125">Small</text><text x="321" y="158">13.67%</text>
              <text x="615" y="190">Large</text><text x="615" y="222">32.62%</text>
              <text x="293" y="479">Medium</text><text x="293" y="512">53.71%</text>
            </g>
          </svg>
        </section>
        <section>
          <h2 class="title title-type">Employement Type</h2>
          <svg class="donut" viewBox="0 0 865 633" role="img" aria-label="Employees by employment type">
            <g fill="none" stroke-width="33">
              <circle cx="432" cy="316" r="144" stroke="#4f80ae"/>
              <circle cx="432" cy="316" r="144" stroke="#b9def2" pathLength="607" stroke-dasharray="5 602" transform="rotate(-90 432 316)"/>
              <circle cx="432" cy="316" r="144" stroke="#7bacd3" pathLength="607" stroke-dasharray="4 603" stroke-dashoffset="-5" transform="rotate(-90 432 316)"/>
              <circle cx="432" cy="316" r="144" stroke="#2a5783" pathLength="607" stroke-dasharray="10 597" stroke-dashoffset="-597" transform="rotate(-90 432 316)"/>
            </g>
            <g class="mark">
              <text x="408" y="110">PT</text><text x="408" y="143">10</text>
              <text x="449" y="110">CT</text><text x="449" y="143">5</text>
              <text x="454" y="506">FT</text><text x="454" y="539">588</text>
            </g>
          </svg>
        </section>
      </div>

      <section class="scatter">
        <h2 class="title title-scatter">Employement Type &amp; Exp. Level</h2>
        <div class="heads"><span class="corner"></span><span class="four">CT</span><span class="two">FL</span><span class="four">FT</span><span class="two">PT</span></div>
        <svg class="plot" viewBox="0 0 870 1174" role="img" aria-label="Average salary by employment type and experience level">
          <g fill="none" stroke="#c8c8c8" stroke-width="2"><path d="M133 0V1174M379 0V1174M501 0V1174M747 0V1174M869 0V1174"/></g>
          <g class="tick">
            <text x="118" y="58">500K</text><text x="118" y="171">450K</text><text x="118" y="284">400K</text><text x="118" y="396">350K</text><text x="118" y="508">300K</text><text x="118" y="621">250K</text><text x="118" y="733">200K</text><text x="118" y="846">150K</text><text x="118" y="958">100K</text><text x="118" y="1072">50K</text><text x="118" y="1166">0K</text>
          </g>
          <text class="axis-name" transform="translate(41 584) rotate(-90)">Avg. Salary</text>
          <g fill="none" stroke-width="4">
            <g stroke="#b9def2"><circle cx="162" cy="1028" r="9"/><circle cx="530" cy="524" r="9"/><circle cx="776" cy="1062" r="9"/></g>
            <g stroke="#7bacd3"><circle cx="224" cy="238" r="9"/><circle cx="592" cy="212" r="9"/></g>
            <g stroke="#4f80ae"><circle cx="286" cy="566" r="9"/><circle cx="408" cy="1074" r="9"/><circle cx="654" cy="66" r="9"/><circle cx="838" cy="792" r="9"/></g>
            <g stroke="#2a5783"><circle cx="348" cy="938" r="9"/><circle cx="470" cy="1038" r="9"/><circle cx="716" cy="690" r="9"/></g>
          </g>
        </svg>
        <div class="levels">
          <div class="corner"></div>
          <div class="level edge"><span>Experienced</span></div>
          <div class="level"><span>Executive</span></div>
          <div class="level"><span>Medium</span></div>
          <div class="level"><span>Senior</span></div>
          <div class="level edge"><span>Medium</span></div>
          <div class="level"><span>Senior</span></div>
          <div class="level edge"><span>Experienced</span></div>
          <div class="level"><span>Executive</span></div>
          <div class="level"><span>Medium</span></div>
          <div class="level"><span>Senior</span></div>
          <div class="level edge"><span>Experienced</span></div>
          <div class="level last"><span>Medium</span></div>
        </div>
      </section>
    </div>

    <section class="residence">
      <h2 class="title title-bars">Top 10 Employee Residence</h2>
      <div class="bars">
        <ul class="bar-names"><li>US</li><li>GB</li><li>IN</li><li>CA</li><li>DE</li><li>FR</li><li>ES</li><li>GR</li><li>JP</li></ul>
        <div class="bar-plot">
          <div class="bar-grid"><i></i><i></i><i></i><i></i><i></i><i></i><i></i><i></i><i></i><i></i><i></i><i></i><i></i><i></i><i></i><i></i><i></i><i></i></div>
          <div class="bar-rows">
            <b style="width:95.05%"></b><b style="width:12.6%"></b><b style="width:8.6%"></b><b style="width:8.3%"></b><b style="width:7.15%"></b><b style="width:5.15%"></b><b style="width:4.3%"></b><b style="width:3.7%"></b><b style="width:2%"></b>
          </div>
        </div>
        <div class="scroll"><div class="thumb"></div></div>
      </div>
    </section>
  </div>
</main>

<footer class="tabs">
  <nav class="tab-list">
    <a class="tab tab-first" href="#exp">Employement Type &amp; Exp. Level</a>
    <a class="tab" href="#salary">Avg Salary</a>
    <a class="tab" href="#type">Employement Type</a>
    <a class="tab" href="#res">Employee Residence</a>
    <a class="tab" href="#country">Average Salary by Country</a>
    <a class="tab tab-active" href="#dash"><svg width="22" height="22" viewBox="0 0 22 22" aria-hidden="true"><path d="M1 1H21V21H1ZM11 1V21M1 11H21" fill="none" stroke="#77757f" stroke-width="2"/></svg>Dashboard 1</a>
  </nav>
  <div class="views">
    <button type="button" aria-label="Filmstrip"><svg width="22" height="22" viewBox="0 0 22 22"><path d="M0 0H22V14H0ZM0 16H6V22H0ZM8 16H14V22H8ZM16 16H22V22H16Z" fill="#6c6987"/></svg></button>
    <button type="button" aria-label="Tabs"><svg width="22" height="22" viewBox="0 0 22 22"><path d="M0 0H22V22H0Z" fill="#d8d7de"/></svg></button>
    <button class="view-back" type="button" aria-label="Previous"><svg width="8" height="14" viewBox="0 0 8 14"><path d="M8 0V14L0 7Z" fill="#e6e5ec"/></svg></button>
    <button class="view-present" type="button" aria-label="Presentation mode"><svg width="26" height="26" viewBox="0 0 26 26"><path d="M0 2H26V6H0ZM12 0H14V2H12ZM12 18H14V22H12ZM9 22H17V24H9Z" fill="#e6e5ec"/><path d="M3 6V17H23V6" fill="none" stroke="#e6e5ec" stroke-width="2"/></svg></button>
  </div>
</footer>
</body>
</html>
```
FILE: styles.css
```css
* { box-sizing: border-box; }
body {
  margin: 0;
  min-height: 100vh;
  display: flex;
  flex-direction: column;
  background: #080238;
  color: #fff;
  font: 24px/32px "Open Sans", "Noto Sans", sans-serif;
}
h2, p, ul { margin: 0; padding: 0; }
li { list-style: none; }
button { padding: 0; border: 0; background: none; font: inherit; color: inherit; }
svg { display: block; }

/* Banner */
.banner {
  display: flex;
  align-items: center;
  height: 80px;
  padding: 0 118px 0 48px;
  background: #cfe9ff;
}
.banner-icon { fill: none; stroke: #1a6e9f; stroke-width: 2; }
.banner-link { margin-left: 28px; color: #12678f; text-decoration: none; }
.banner-buy { margin-left: auto; }

/* Page grid */
.dashboard {
  flex: 1;
  display: grid;
  grid-template-columns: 286px minmax(0, 1755fr) minmax(0, 1775fr);
  padding-right: 24px;
}
.title { color: #76a1c8; font-size: 38px; line-height: 48px; font-weight: 700; }
.title-top { height: 107px; padding: 36px 0 0 8px; }
.title-type { height: 102px; padding: 30px 0 0 16px; }
.title-scatter { height: 107px; padding: 36px 0 0 16px; }
.title-bars { height: 101px; padding: 28px 0 0 8px; }

/* Filters */
.filters { display: flex; flex-direction: column; padding: 25px 22px 0 14px; color: #d4d3da; }
.filter { margin-bottom: 26px; padding: 0 4px 0 0; }
.filter label { display: block; height: 42px; }
.filter .picker { margin-left: 6px; }
.filter-size { margin-bottom: 48px; padding: 0 0 0 10px; }
.picker {
  position: relative;
  height: 40px;
  border: 2px solid #c9c9cf;
  background: #797593;
}
.picker::before { content: ""; position: absolute; right: 34px; top: 0; bottom: 0; width: 2px; background: #e6e6ea; pointer-events: none; }
.picker::after { content: ""; position: absolute; right: 10px; top: 14px; border: 7px solid transparent; border-top: 9px solid #e6e6ea; border-bottom: 0; pointer-events: none; }
.picker select { width: 100%; height: 100%; padding: 0 6px; border: 0; background: none; appearance: none; color: #dcdbe3; font: inherit; font-size: 22px; }

/* Map */
.map { position: relative; height: 1888px; max-height: calc(100% - 132px); border: 2px solid #e9e9e9; background: #000; overflow: hidden; }
.map-art { width: 100%; height: 100%; }
.land path { stroke: #10151a; stroke-width: 2; stroke-linejoin: round; vector-effect: non-scaling-stroke; }
.fine path { stroke-width: 1; }
.land .dark, .land path[fill] { stroke: none; }
.dark { fill: #0f0f0f; }
.land .ice { fill: #000; stroke: none; }
.land .lake { fill: #2b2b2b; stroke-width: 1; }
.land .line { fill: none; stroke: #444; stroke-width: 2; }
.land .coast { stroke: #10151a; stroke-width: 1; }
.land .rift { fill: none; stroke: #0d1013; }
.land .thick { stroke-width: 3; }
.land .fjord { fill: none; stroke: #2b2b2b; stroke-width: 3; }
.ca { fill: #486f95; }
.us { fill: #355c82; }
.mx { fill: #2f577c; }
.ru { fill: #3f668b; }
.cn { fill: #345b80; }
.in { fill: #284e75; }
.jp { fill: #2c5781; }
.br { fill: #557b9f; }
.co { fill: #84a7bf; }
.cl { fill: #274e76; }
.ke, .ir { fill: #94b3c5; }
.au { fill: #41698f; }
.vn { fill: #94b6c8; }
.my, .it, .ee { fill: #7a9fb8; }
.de { fill: #50789c; }
.pl { fill: #41688d; }
.fr { fill: #6288a8; }
.es { fill: #6b8fae; }
.gb { fill: #557c9f; }
.ch { fill: #2f5780; }
.hu { fill: #244a70; }
.ro { fill: #5d83a5; }
.ua { fill: #8aabbe; }
.tr { fill: #365d84; }
.dz { fill: #487095; }

.map-search, .map-tools { position: absolute; left: 18px; width: 56px; border: 2px solid #b4b4b4; background: rgba(232, 232, 232, .9); }
.map-search { top: 20px; height: 56px; display: grid; place-items: center; }
.map-tools { top: 93px; height: 220px; display: flex; flex-direction: column; }
.map-tools button { height: 50px; display: grid; place-items: center; }
.map-tools .tool-more { flex: 1; margin: 0 6px; border-top: 2px solid #efefef; }
.map-tools .tool-pin { height: 58px; }
.map-credit { position: absolute; left: 4px; bottom: 3px; padding: 0 8px 0 6px; background: #202536; color: #f0f0f0; font: 16px/24px "Liberation Sans", Arial, sans-serif; }
.map-unknown { position: absolute; right: 10px; bottom: 9px; height: 28px; padding: 0 16px; border-radius: 6px; background: linear-gradient(90deg, #8c8c8c, #737373); color: #fff; font: 700 21px/28px Inter, sans-serif; }

/* Charts */
.right { padding-left: 19px; }
.charts { display: grid; grid-template-columns: minmax(0, 869fr) minmax(0, 870fr); gap: 17px; }
.donut { width: 100%; border: 2px solid #c8c8c8; }
.mark { fill: #fff; font-size: 25px; font-weight: 300; text-anchor: middle; }
.heads, .levels { display: grid; grid-template-columns: 132fr repeat(12, minmax(0, 61.5fr)); color: #686868; }
.heads { height: 41px; border-bottom: 2px solid #c8c8c8; line-height: 42px; text-align: center; }
.heads span, .level.edge { border-left: 2px solid #c8c8c8; }
.heads span:last-child, .level.last { border-right: 2px solid #c8c8c8; }
.heads .corner { border: 0; }
.heads .four { grid-column: span 4; }
.heads .two { grid-column: span 2; }
.plot { width: 100%; }
.tick { fill: #686868; font-size: 24px; text-anchor: end; }
.axis-name { fill: #35353a; font-size: 23px; text-anchor: middle; }
.levels { height: 159px; border-top: 3px solid #c8c8c8; }
.level { display: flex; align-items: flex-start; justify-content: center; padding-top: 6px; }
.level span { writing-mode: vertical-rl; rotate: 180deg; }

/* Bars */
.bars { display: grid; grid-template-columns: 160px minmax(0, 1fr) 34px; height: 393px; }
.bar-names { padding-top: 1px; overflow: hidden; color: #686868; text-align: right; }
.bar-names li { height: 44px; padding-right: 12px; line-height: 44px; }
.bar-plot { display: grid; border-bottom: 3px solid #ededed; overflow: hidden; }
.bar-grid, .bar-rows { grid-area: 1 / 1; min-width: 0; min-height: 0; }
.bar-grid { display: flex; }
.bar-grid i { flex: 0 0 5.726%; border-left: 2px solid #ededed; }
.bar-grid i:last-child { flex: 1; }
.bar-rows { height: 390px; padding-top: 6px; overflow: hidden; }
.bar-rows b { display: block; height: 34px; margin-bottom: 10px; background: #76a1c8; }
.scroll { padding: 6px 6px 0 12px; background: #fafafa; }
.thumb { height: 342px; border-radius: 8px; background: #7f7f7f; }

/* Sheet tabs */
.tabs { display: flex; height: 60px; background: #34305a; }
.tab-list { display: flex; }
.tab { display: flex; align-items: center; gap: 8px; padding: 0 22px 0 12px; border-right: 2px solid #47446a; color: #fff; text-decoration: none; }
.tab-active { padding: 0 16px; background: #080238; font-weight: 700; }
.views { display: flex; align-items: center; gap: 22px; margin-left: auto; padding: 12px 8px 0 0; }
.view-back { margin-left: 6px; }
.view-present { margin-left: 46px; }
```
